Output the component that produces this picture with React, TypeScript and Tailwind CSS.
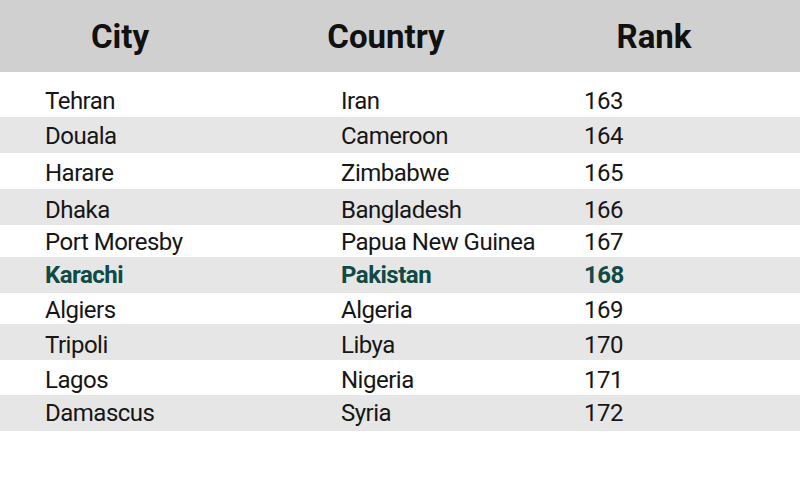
import React from "react";

type Row = {
    city: string;
    country: string;
    rank: number;
    h: string;
    pt: string;
    shaded?: boolean;
    highlight?: boolean;
};

const rows: Row[] = [
    { city: "Tehran", country: "Iran", rank: 163, h: "h-[36px]", pt: "pt-[8px]" },
    { city: "Douala", country: "Cameroon", rank: 164, h: "h-[36px]", pt: "pt-[7px]", shaded: true },
    { city: "Harare", country: "Zimbabwe", rank: 165, h: "h-[36px]", pt: "pt-[8px]" },
    { city: "Dhaka", country: "Bangladesh", rank: 166, h: "h-[36px]", pt: "pt-[9px]", shaded: true },
    { city: "Port Moresby", country: "Papua New Guinea", rank: 167, h: "h-[32px]", pt: "pt-[5px]" },
    { city: "Karachi", country: "Pakistan", rank: 168, h: "h-[36px]", pt: "pt-[6px]", shaded: true, highlight: true },
    { city: "Algiers", country: "Algeria", rank: 169, h: "h-[31px]", pt: "pt-[5px]" },
    { city: "Tripoli", country: "Libya", rank: 170, h: "h-[36px]", pt: "pt-[9px]", shaded: true },
    { city: "Lagos", country: "Nigeria", rank: 171, h: "h-[35px]", pt: "pt-[8px]" },
    { city: "Damascus", country: "Syria", rank: 172, h: "h-[36px]", pt: "pt-[6px]", shaded: true }
];

export default function App() {
    return (
        <div className="w-[800px] h-[480px] bg-white overflow-hidden">
            {/* Header band */}
            <div className="h-[72px] bg-[#d0d0d0] grid grid-cols-[240px_292px_244px] items-center font-['Roboto',sans-serif] font-bold text-[33px] leading-none text-[#111]">
                <div className="text-center">City</div>
                <div className="text-center">Country</div>
                <div className="text-center">Rank</div>
            </div>

            <div className="h-[9px]" />

            {/* Body rows */}
            <div className="font-['Roboto',sans-serif] text-[24px] leading-[24px] tracking-[-0.5px] text-[#161616]">
                {rows.map((row) => (
                    <div
                        key={row.city}
                        className={`grid grid-cols-[296px_243px_1fr] pl-[45px] ${row.h} ${row.pt} ${row.shaded ? "bg-[#e6e6e6]" : ""} ${row.highlight ? "font-bold text-[#0f4a45]" : ""}`}
                    >
                        <div>{row.city}</div>
                        <div>{row.country}</div>
                        <div>{row.rank}</div>
                    </div>
                ))}
            </div>
        </div>
    );
}
